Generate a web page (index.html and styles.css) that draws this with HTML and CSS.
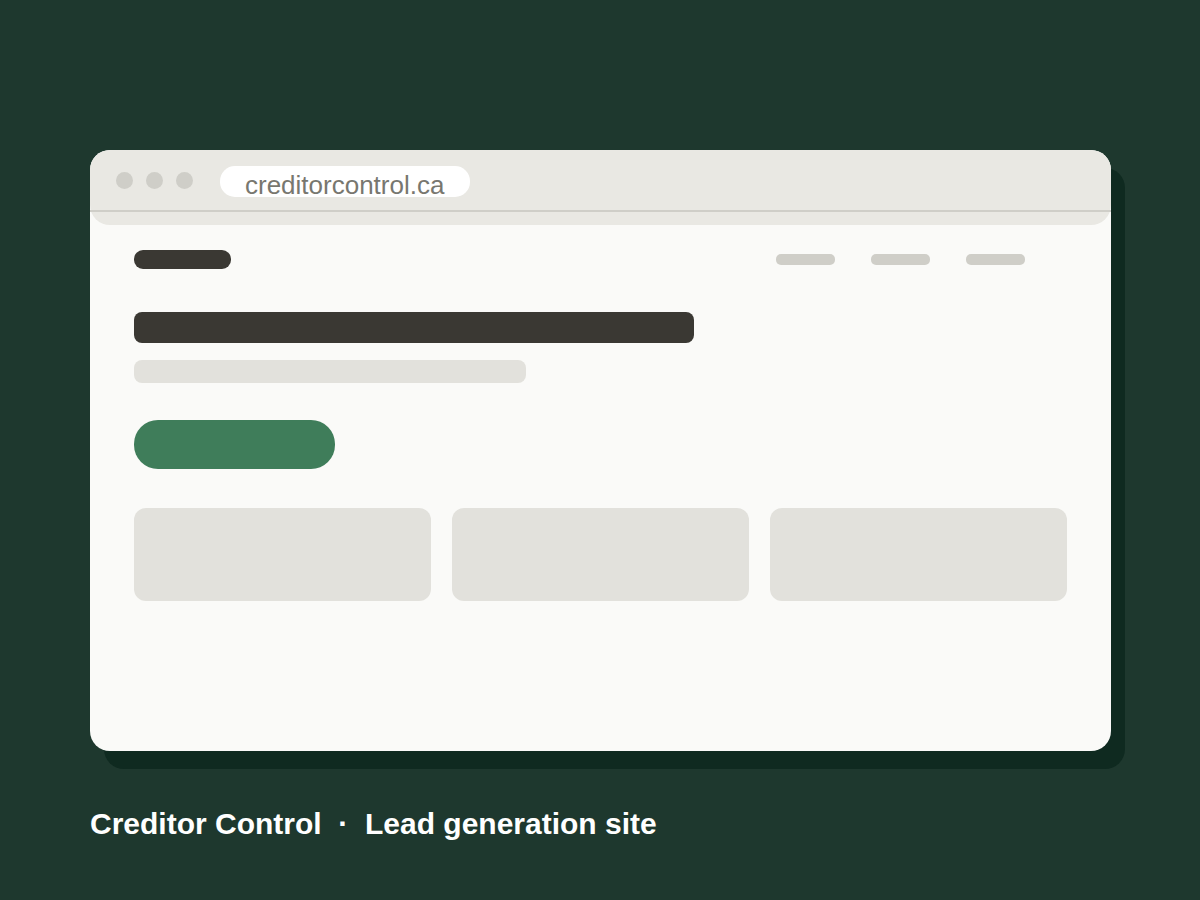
FILE: index.html
```html
<!DOCTYPE html>
<html lang="en">
<head>
<meta charset="utf-8">
<title>Creditor Control</title>
<link rel="stylesheet" href="styles.css">
</head>
<body>
<main class="stage">
  <section class="browser" aria-label="Site preview">
    <header class="toolbar">
      <div class="toolbar-row">
        <div class="dots"><span class="dot"></span><span class="dot"></span><span class="dot"></span></div>
        <div class="address">creditorcontrol.ca</div>
      </div>
      <div class="toolbar-lip"></div>
    </header>
    <div class="page">
      <div class="nav">
        <span class="logo"></span>
        <div class="links"><span class="link"></span><span class="link"></span><span class="link"></span></div>
      </div>
      <div class="headline"></div>
      <div class="subline"></div>
      <div class="cta"></div>
      <div class="cards"><div class="card"></div><div class="card"></div><div class="card"></div></div>
    </div>
  </section>
  <h1 class="caption">Creditor Control&nbsp; ·&nbsp; Lead generation site</h1>
</main>
</body>
</html>
```
FILE: styles.css
```css
* { box-sizing: border-box; }

body {
  margin: 0;
  background: #1e382e;
  font-family: "Liberation Sans", Arial, sans-serif;
}

.stage {
  min-height: 100vh;
  padding: 150px 89px 56px 90px;
}

.browser {
  border-radius: 20px;
  background: #fafaf8;
  box-shadow: 14px 18px 0 #0f2a20;
}

.toolbar {
  border-radius: 20px;
  background: #e9e8e3;
}

.toolbar-row {
  display: flex;
  align-items: flex-start;
  gap: 27px;
  height: 62px;
  padding: 16px 26px 0;
  border-bottom: 2px solid #cfcec8;
}

.toolbar-lip { height: 13px; }

.dots {
  display: flex;
  gap: 13px;
  padding-top: 6px;
}

.dot {
  width: 17px;
  height: 17px;
  border-radius: 50%;
  background: #cfcec8;
}

.address {
  width: 250px;
  height: 31px;
  padding: 4px 25px 0;
  border-radius: 15px;
  background: #fff;
  color: #78776f;
  font-size: 26px;
  line-height: 30px;
}

.page { padding: 25px 44px 150px; }

.nav {
  display: flex;
  align-items: center;
  justify-content: space-between;
}

.logo {
  width: 97px;
  height: 19px;
  border-radius: 9px;
  background: #3a3833;
}

.links {
  display: flex;
  gap: 36px;
  margin-right: 42px;
}

.link {
  width: 59px;
  height: 11px;
  border-radius: 5px;
  background: #cfcec8;
}

.headline {
  width: 60%;
  height: 31px;
  margin-top: 43px;
  border-radius: 8px;
  background: #3a3833;
}

.subline {
  width: 42%;
  height: 23px;
  margin-top: 17px;
  border-radius: 8px;
  background: #e2e1dc;
}

.cta {
  width: 201px;
  height: 49px;
  margin-top: 37px;
  border-radius: 24px;
  background: #3f7d5a;
}

.cards {
  display: grid;
  grid-template-columns: repeat(3, 1fr);
  gap: 21px;
  margin-top: 39px;
}

.card {
  height: 93px;
  border-radius: 12px;
  background: #e2e1dc;
}

.caption {
  margin: 55px 0 0;
  color: #fff;
  font-size: 30px;
  line-height: 36px;
}
```
